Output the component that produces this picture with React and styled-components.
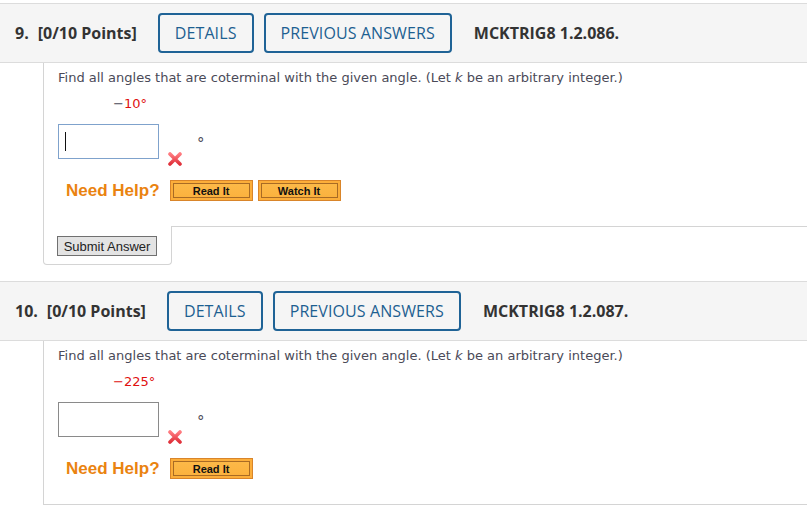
import React from "react";
import styled, { createGlobalStyle } from "styled-components";

const GlobalStyle = createGlobalStyle`
  html, body {
    margin: 0;
    padding: 0;
    background: #fff;
  }
  body {
    font-family: "Open Sans", sans-serif;
  }
`;

const Page = styled.div`
  padding-top: 3px;
  width: 807px;
  overflow: hidden;
`;

const Question = styled.section`
  margin-bottom: ${(p) => (p.$last ? "0" : "16px")};
`;

const Header = styled.div`
  display: flex;
  align-items: center;
  height: 58px;
  padding-left: 15px;
  background: #f5f5f5;
  border-top: 1px solid #dcdcdc;
  border-bottom: 1px solid #dcdcdc;
  font-family: "Open Sans", sans-serif;
  font-weight: 700;
  font-size: 16px;
  color: #333;
`;

const Number = styled.span`
  margin-right: 9px;
`;

const Points = styled.span`
  margin-right: 21px;
`;

const HeaderButton = styled.button`
  height: 40px;
  padding: 0 15px;
  margin-right: 10px;
  background: #f5f5f5;
  border: 2px solid #1f6396;
  border-radius: 4px;
  font-family: "Open Sans", sans-serif;
  font-size: 16px;
  font-weight: 500;
  letter-spacing: 0.1px;
  color: #1d5f91;
  cursor: pointer;
`;

const Code = styled.span`
  margin-left: 12px;
`;

const Body = styled.div`
  margin-left: 43px;
`;

const Content = styled.div`
  height: 158px;
  padding: 5px 0 0 14px;
  border-left: 1px solid #d4d4d4;
  border-bottom: 1px solid #d4d4d4;
  font-family: "DejaVu Sans", Verdana, sans-serif;
  font-size: 13px;
  line-height: 20px;
  color: #4a4a58;
`;

const Prompt = styled.div`
  em {
    font-style: italic;
  }
`;

const Given = styled.div`
  margin: 6px 0 0 55px;
  color: #e01010;

  span {
    color: ${(p) => (p.$darkSign ? "#4a4a58" : "#e01010")};
  }
`;

const AnswerRow = styled.div`
  display: flex;
  align-items: flex-start;
  height: 35px;
  margin-top: 10px;
`;

const AnswerInput = styled.input`
  box-sizing: border-box;
  width: 101px;
  height: 35px;
  margin: 0;
  padding: 0 6px;
  border: 1px solid ${(p) => (p.$focused ? "#7fa2cc" : "#8a8a8a")};
  outline: none;
  font-family: "DejaVu Sans", sans-serif;
  font-size: 14px;
`;

const Caret = styled.span`
  position: absolute;
  left: 7px;
  top: 8px;
  width: 1px;
  height: 19px;
  background: #111;
`;

const InputWrap = styled.div`
  position: relative;
`;

const WrongMark = styled.svg`
  flex: none;
  margin: 28px 0 0 9px;
`;

const Degree = styled.span`
  margin: 10px 0 0 15px;
  font-size: 15px;
  line-height: 20px;
  color: #4a4a58;
`;

const HelpRow = styled.div`
  display: flex;
  align-items: center;
  margin-top: 21px;
  padding-left: 8px;
`;

const HelpLabel = styled.span`
  margin-right: 10px;
  font-family: "Liberation Sans", Arial, sans-serif;
  font-weight: 700;
  font-size: 17px;
  color: #ea8310;
`;

const HelpButton = styled.button`
  box-sizing: border-box;
  width: 83px;
  height: 21px;
  margin: 0 5px 0 0;
  padding: 0;
  border: 1px solid #d9852a;
  background: linear-gradient(#fdbb4a, #fbb03c);
  box-shadow: inset 0 0 0 2px #fcae3a, inset 0 0 0 3px #a96b24;
  font-family: "Liberation Sans", Arial, sans-serif;
  font-weight: 700;
  font-size: 11px;
  color: #111;
  cursor: pointer;
`;

const SubmitTab = styled.div`
  box-sizing: border-box;
  width: 129px;
  margin-top: -1px;
  padding: 10px 0 8px 13px;
  background: #fff;
  border: 1px solid #d4d4d4;
  border-top: none;
  border-radius: 0 0 4px 4px;
`;

const SubmitButton = styled.button`
  box-sizing: border-box;
  width: 100px;
  height: 20px;
  padding: 0;
  border: 1px solid #707070;
  background: #e3e3e3;
  font-family: "Liberation Sans", Arial, sans-serif;
  font-size: 13px;
  color: #222;
  display: block;
`;

function XMark() {
  return (
    <WrongMark width="14" height="14" viewBox="0 0 14 14">
      <defs>
        <linearGradient id="xg" x1="0" y1="0" x2="0" y2="1">
          <stop offset="0" stopColor="#ff7b80" />
          <stop offset="1" stopColor="#e0313b" />
        </linearGradient>
      </defs>
      <path
        d="M2 2 L12 12 M12 2 L2 12"
        stroke="url(#xg)"
        strokeWidth="3.6"
        strokeLinecap="round"
      />
    </WrongMark>
  );
}

function QuestionBlock({ num, code, angle, darkSign, focused, watch, submit, last }) {
  return (
    <Question $last={last}>
      <Header>
        <Number>{num}.</Number>
        <Points>[0/10 Points]</Points>
        <HeaderButton>DETAILS</HeaderButton>
        <HeaderButton>PREVIOUS ANSWERS</HeaderButton>
        <Code>{code}</Code>
      </Header>
      <Body>
        <Content>
          <Prompt>
            Find all angles that are coterminal with the given angle. (Let <em>k</em> be an
            arbitrary integer.)
          </Prompt>
          <Given $darkSign={darkSign}>
            <span>−</span>
            {angle}°
          </Given>
          <AnswerRow>
            <InputWrap>
              <AnswerInput $focused={focused} defaultValue="" />
              {focused && <Caret />}
            </InputWrap>
            <XMark />
            <Degree>°</Degree>
          </AnswerRow>
          <HelpRow>
            <HelpLabel>Need Help?</HelpLabel>
            <HelpButton>Read It</HelpButton>
            {watch && <HelpButton>Watch It</HelpButton>}
          </HelpRow>
        </Content>
        {submit && (
          <SubmitTab>
            <SubmitButton>Submit Answer</SubmitButton>
          </SubmitTab>
        )}
      </Body>
    </Question>
  );
}

export default function App() {
  return (
    <Page>
      <GlobalStyle />
      <QuestionBlock num="9" code="MCKTRIG8 1.2.086." angle="10" darkSign focused watch submit />
      <QuestionBlock num="10" code="MCKTRIG8 1.2.087." angle="225" last />
    </Page>
  );
}
